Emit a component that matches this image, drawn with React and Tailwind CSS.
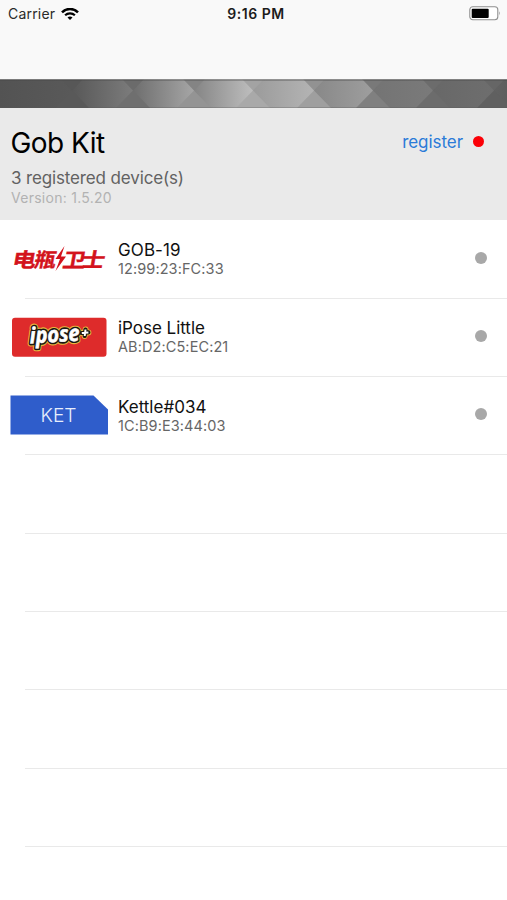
import React from "react";

const CELLS = [
  { x: 0, w: 72, from: "#535353", to: "#595959" },
  { x: 72, w: 61, from: "#585858", to: "#7c7c7c" },
  { x: 133, w: 61, from: "#6e6e6e", to: "#a6a6a6" },
  { x: 194, w: 59, from: "#858585", to: "#bebebe" },
  { x: 253, w: 61, from: "#9b9b9b", to: "#b4b4b4" },
  { x: 314, w: 59, from: "#888888", to: "#9e9e9e" },
  { x: 373, w: 60, from: "#747474", to: "#7a7a7a" },
  { x: 433, w: 61, from: "#686868", to: "#6e6e6e" },
  { x: 494, w: 13, from: "#626262", to: "#5e5e5e" },
];

const CROSSINGS = [
  { x: 72, top: "#575757", bottom: "#595959" },
  { x: 133, top: "#6b6b6b", bottom: "#6f6f6f" },
  { x: 194, top: "#848484", bottom: "#949494" },
  { x: 253, top: "#a3a3a3", bottom: "#a9a9a9" },
  { x: 314, top: "#929292", bottom: "#9f9f9f" },
  { x: 373, top: "#797979", bottom: "#808080" },
  { x: 433, top: "#6c6c6c", bottom: "#6c6c6c" },
  { x: 494, top: "#666666", bottom: "#606060" },
];

function Banner() {
  return (
    <svg className="block h-[29px] w-full shrink-0" viewBox="0 0 507 29">
      <defs>
        {CELLS.map((c, i) => (
          <linearGradient key={i} id={`cell${i}`}>
            <stop offset="0" stopColor={c.from} />
            <stop offset="1" stopColor={c.to} />
          </linearGradient>
        ))}
      </defs>
      {CELLS.map((c, i) => (
        <rect key={i} x={c.x} y="0" width={c.w + 0.5} height="29" fill={`url(#cell${i})`} />
      ))}
      {CROSSINGS.map((c) => (
        <g key={c.x}>
          <path d={`M${c.x} 11.5L${c.x - 11} 0H${c.x + 11}Z`} fill={c.top} />
          <path d={`M${c.x} 11.5L${c.x - 17} 29H${c.x + 17}Z`} fill={c.bottom} />
        </g>
      ))}
      <rect width="507" height="1" fill="#8c8c8c" fillOpacity=".7" />
      <rect y="1" width="507" height="1" fill="#444" fillOpacity=".35" />
      <rect y="28" width="507" height="1" fill="#555" fillOpacity=".3" />
    </svg>
  );
}

function BatteryGuardLogo() {
  return (
    <svg className="block h-[40px] w-[98px]" viewBox="0 0 98 40">
      <g
        fill="#d3131c"
        stroke="#d3131c"
        strokeWidth=".4"
        fontFamily="'Noto Sans CJK SC', sans-serif"
        fontWeight="700"
        fontSize="23"
      >
        <text transform="translate(1.5 27.6) skewX(-10) scale(1.02 .86)">电</text>
        <text transform="translate(23.2 27.6) skewX(-10) scale(.96 .86)">瓶</text>
        <text transform="translate(51.8 27.6) skewX(-10) scale(1 .86)">卫</text>
        <text transform="translate(70.6 27.6) skewX(-10) scale(1.02 .86)">士</text>
      </g>
      <path d="M54.5 7L45.5 20H50L45.5 32L56 17.5H51Z" fill="#d3131c" />
    </svg>
  );
}

function IposeLogo() {
  const word = {
    fontFamily: "'Open Sans', sans-serif",
    fontWeight: 700,
    fontStyle: "italic",
    fontSize: 22,
    strokeLinejoin: "round",
    textLength: 50,
    lengthAdjust: "spacingAndGlyphs",
    transform: "translate(20 26.4) rotate(-3)",
  };
  const plus = "M75.5 12.5L74.7 19M71.8 16L78.4 15.4";
  return (
    <svg className="block h-[40px] w-[98px] overflow-visible" viewBox="0 0 98 40">
      <rect x="2" y=".7" width="94.5" height="39" rx="3" fill="#de2b2b" />
      <text {...word} fill="#e9b43c" stroke="#e9b43c" strokeWidth="6">ipose</text>
      <path d={plus} stroke="#e9b43c" strokeWidth="6" strokeLinecap="round" />
      <text {...word} fill="#1c1712" stroke="#1c1712" strokeWidth="3.8">ipose</text>
      <path d={plus} stroke="#1c1712" strokeWidth="4.2" strokeLinecap="round" />
      <text {...word} fill="#fff" stroke="#fff" strokeWidth=".6">ipose</text>
      <path d={plus} stroke="#fff" strokeWidth="2" />
    </svg>
  );
}

function KetLogo() {
  return (
    <svg className="block h-[40px] w-[98px]" viewBox="0 0 98 40">
      <path d="M.5 .5H83.5L98 14.5V39.5H.5Z" fill="#2f5dcb" />
      <text
        x="30.5"
        y="26.8"
        fill="#e8eefc"
        fontFamily="Inter, sans-serif"
        fontWeight="300"
        fontSize="19"
        textLength="36"
        lengthAdjust="spacingAndGlyphs"
      >
        KET
      </text>
    </svg>
  );
}

const DEVICES = [
  { name: "GOB-19", mac: "12:99:23:FC:33", Logo: BatteryGuardLogo, nameCls: "tracking-[0.1px]" },
  { name: "iPose Little", mac: "AB:D2:C5:EC:21", Logo: IposeLogo, nameCls: "tracking-[-0.03px]" },
  { name: "Kettle#034", mac: "1C:B9:E3:44:03", Logo: KetLogo, nameCls: "tracking-[0px]" },
];

function Row({ children }) {
  return (
    <div className="flex h-[78.3px] shrink-0 flex-col">
      <div className="flex flex-1 items-center pl-[10px] pr-[20px]">{children}</div>
      <div className="ml-[25px] h-px shrink-0 bg-[#e9e9e9]" />
    </div>
  );
}

export default function App() {
  return (
    <div className="flex h-[900px] w-[507px] flex-col overflow-hidden bg-white font-['Inter',sans-serif]">
      <div className="h-[79px] shrink-0 bg-[#f9f9f9]">
        <div className="grid h-[27px] grid-cols-3 items-center">
          <div className="flex items-center gap-[6px] pl-[8px]">
            <span className="text-[14px] leading-none tracking-[0.2px] text-[#2a2a2a]">Carrier</span>
            <svg className="h-[12px] w-[18px]" viewBox="0 0 18 12" fill="none" stroke="#000">
              <path d="M1 4.3C5.3-.1 12.7-.1 17 4.3" strokeWidth="2.5" />
              <path d="M4.1 7.3C6.8 4.7 11.2 4.7 13.9 7.3" strokeWidth="2.2" />
              <path d="M9 12L6.5 9.5C7.9 8.2 10.1 8.2 11.5 9.5Z" fill="#000" stroke="none" />
            </svg>
          </div>
          <div className="pl-[5px] text-center text-[14px] font-semibold leading-none tracking-[0.5px] text-[#1c1c1c]">9:16 PM</div>
          <div className="flex justify-end pr-[5px]">
            <svg className="h-[15px] w-[33px]" viewBox="0 0 33 15">
              <rect x=".8" y=".8" width="28" height="13" rx="3" fill="#fff" stroke="#8f8f8f" strokeWidth="1.1" />
              <rect x="2.7" y="2.7" width="17" height="9.2" rx="1" fill="#000" />
              <path d="M30.2 5.2Q32 7.3 30.2 9.4Z" fill="#8f8f8f" />
            </svg>
          </div>
        </div>
      </div>

      <Banner />

      <div className="flex h-[112px] shrink-0 justify-between bg-[#eaeaea] pl-[11px] pr-[23px]">
        <div className="flex flex-col pt-[18px]">
          <h1 className="-ml-[0.5px] text-[28px] leading-[34px] tracking-[-0.55px] text-black">Gob Kit</h1>
          <p className="mt-[7px] text-[17px] leading-[22px] tracking-[-0.14px] text-[#626262]">3 registered device(s)</p>
          <p className="text-[14px] leading-[18px] tracking-[0.27px] text-[#b2b2b2]">Version: 1.5.20</p>
        </div>
        <div className="mt-[22px] flex h-[24px] items-center gap-[10px]">
          <span className="text-[17px] leading-none tracking-[-0.05px] text-[#2b7bd8]">register</span>
          <span className="mb-px size-[11px] rounded-full bg-[#fb0007]" />
        </div>
      </div>

      <div className="flex flex-col pt-[0.5px]">
        {DEVICES.map(({ name, mac, Logo, nameCls }) => (
          <Row key={mac}>
            <div className="pb-[1px]">
              <Logo />
            </div>
            <div className="ml-[10px] flex flex-col">
              <span className={`text-[17px] leading-[20px] text-[#111] ${nameCls}`}>{name}</span>
              <span className="text-[14.5px] leading-[18px] tracking-[0.1px] text-[#666]">{mac}</span>
            </div>
            <span className="mb-[3px] ml-auto size-[12px] rounded-full bg-[#a8a8a8]" />
          </Row>
        ))}
        {[0, 1, 2, 3, 4].map((n) => (
          <Row key={n} />
        ))}
      </div>
    </div>
  );
}
